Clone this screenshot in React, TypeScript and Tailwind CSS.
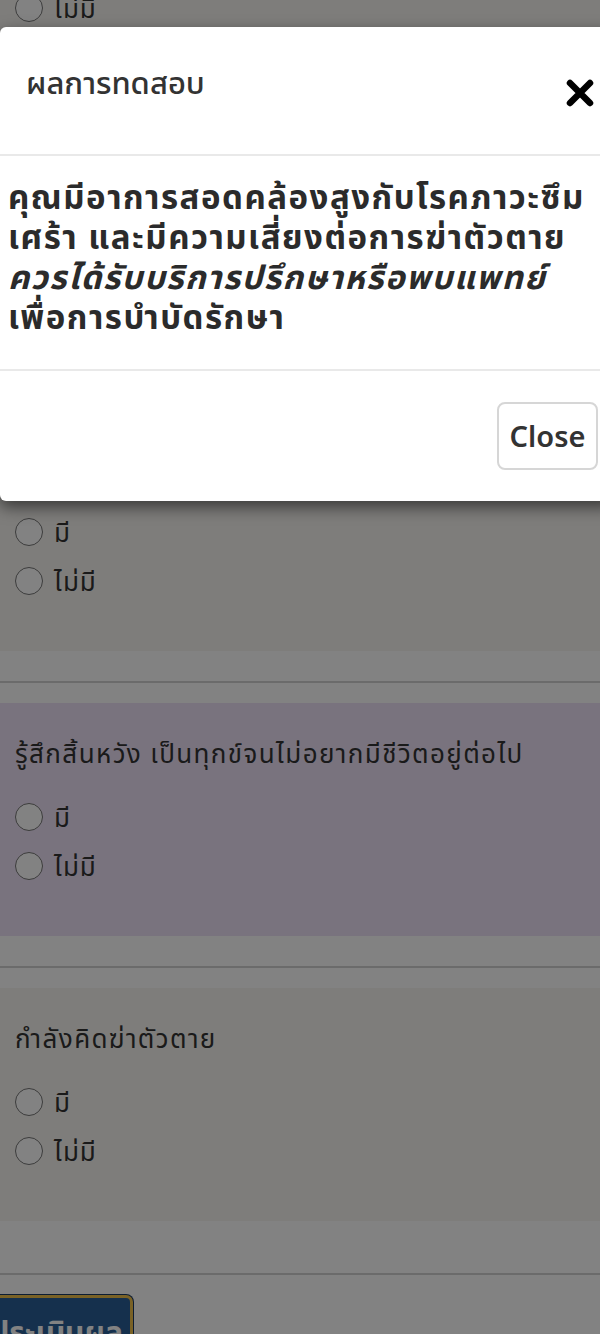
import React from "react";

const thai = "font-['Noto_Sans','Noto_Sans_Thai','DejaVu_Sans',sans-serif]";

function Radio({ label }: { label: string }) {
  return (
    <label className="flex h-9 items-center gap-[11px]">
      <span className="h-[28px] w-[28px] shrink-0 rounded-full border-[1.5px] border-[#767676] bg-white" />
      <span className="text-[26px] leading-9 tracking-[1px] text-[#333]">{label}</span>
    </label>
  );
}

function Separator({ top = 30 }: { top?: number }) {
  return (
    <div className={top === 30 ? "pt-[30px] pb-[20px]" : "pt-[52px] pb-[20px]"}>
      <div className="h-[2px] bg-[#d2d2d2]" />
    </div>
  );
}

function Question({ text, tint = false }: { text: string; tint?: boolean }) {
  return (
    <div className={`${tint ? "bg-[#eee2f8]" : "bg-[#f8f6f2]"} px-[15px] pt-[32px] pb-[52px]`}>
      <p className="text-[26px] leading-9 tracking-[1.4px] text-[#333]">{text}</p>
      <div className="mt-[28px] flex flex-col gap-[13px]">
        <Radio label="มี" />
        <Radio label="ไม่มี" />
      </div>
    </div>
  );
}

function ResultModal() {
  return (
    <div className="absolute left-0 top-[27px] w-[615px] overflow-hidden rounded-[6px] bg-white shadow-[0_6px_16px_rgba(0,0,0,0.55)]">
      <div className="flex h-[129px] items-center justify-between border-b-2 border-[#e9e9e9] pl-[26px] pr-[20px]">
        <h2 className="-mt-[18px] text-[31px] font-medium leading-10 text-[#333]">ผลการทดสอบ</h2>
        <button type="button" className="mt-[4px] text-black" aria-label="close">
          <svg width="30" height="30" viewBox="0 0 30 30">
            <path d="M5 5 L25 25 M25 5 L5 25" stroke="currentColor" strokeWidth="6.5" strokeLinecap="round" />
          </svg>
        </button>
      </div>
      <div className="border-b-2 border-[#e9e9e9] pl-[8px] pt-[21px] pb-[32px]">
        <p className="whitespace-nowrap text-[33px] font-bold leading-10 tracking-[1.5px] text-[#2b2b2b]">
          คุณมีอาการสอดคล้องสูงกับโรคภาวะซึม
          <br />
          เศร้า และมีความเสี่ยงต่อการฆ่าตัวตาย
          <br />
          <em>ควรได้รับบริการปรึกษาหรือพบแพทย์</em>
          <br />
          เพื่อการบำบัดรักษา
        </p>
      </div>
      <div className="flex h-[130px] items-start justify-start pl-[497px] pt-[31px]">
        <button
          type="button"
          className="h-[68px] w-[101px] rounded-[8px] border-2 border-[#d6d6d6] bg-white text-[29px] font-semibold text-[#333]"
        >
          Close
        </button>
      </div>
    </div>
  );
}

export default function App() {
  return (
    <div className={`relative h-[1334px] w-[600px] overflow-hidden bg-white ${thai}`}>
      <div className="-mt-[10px]">
        <div className="bg-[#f8f6f2] px-[15px] pb-[52px]">
          <Radio label="ไม่มี" />
        </div>
        <Separator />
        <div className="bg-[#f8f6f2] px-[15px] pt-[32px] pb-[52px]">
          <p className="h-[324px] text-[26px] leading-9 text-[#333]">มีความคิดอยากตาย หรือคิดว่าตายไปจะดีกว่า</p>
          <div className="mt-[28px] flex flex-col gap-[13px]">
            <Radio label="มี" />
            <Radio label="ไม่มี" />
          </div>
        </div>
        <Separator />
        <Question text="รู้สึกสิ้นหวัง เป็นทุกข์จนไม่อยากมีชีวิตอยู่ต่อไป" tint />
        <Separator />
        <Question text="กำลังคิดฆ่าตัวตาย" />
        <Separator top={52} />
        <div className="-ml-[20px]">
          <button
            type="button"
            className="h-[72px] w-[153px] rounded-[7px] border-[3px] border-[#f0c04c] bg-[#2a5f98] text-[30px] font-bold text-white ring-1 ring-[#1b3a63]"
          >
            ประเมินผล
          </button>
        </div>
      </div>

      <div className="absolute inset-0 bg-black/[0.49]" />
      <ResultModal />
    </div>
  );
}
